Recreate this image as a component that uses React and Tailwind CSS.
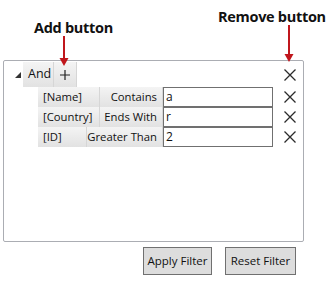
import React from "react";

const XIcon = () => (
  <svg width="12" height="12" viewBox="0 0 12 12" className="block">
    <path d="M0.5 0.5 L11.5 11.5 M11.5 0.5 L0.5 11.5" stroke="#2b2b2b" strokeWidth="1.3" fill="none" />
  </svg>
);

const Arrow = ({ h }) => (
  <svg width="10" height={h} viewBox={`0 0 10 ${h}`} className="block">
    <line x1="5" y1="0" x2="5" y2={h - 6} stroke="#c0161c" strokeWidth="2" />
    <polygon points={`0.5,${h - 8} 9.5,${h - 8} 5,${h}`} fill="#c0161c" />
  </svg>
);

const btn =
  "flex items-center h-full whitespace-nowrap bg-gradient-to-b from-[#f4f4f4] to-[#e2e2e2] border-r border-[#d6d6d6] text-[11.3px] text-[#111] leading-none";

const rows = [
  { field: "[Name]", fw: "w-[62px]", op: "Contains", ow: "w-[63px]", val: "a" },
  { field: "[Country]", fw: "w-[62px]", op: "Ends With", ow: "w-[63px]", val: "r" },
  { field: "[ID]", fw: "w-[49px]", op: "Greater Than", ow: "w-[76px]", val: "2" },
];

export default function App() {
  return (
    <div className="w-[329px] h-[289px] bg-white relative" style={{ fontFamily: '"Open Sans", "Noto Sans", sans-serif' }}>
      <div className="h-[60px] relative">
        <div className="absolute left-[34px] top-[21px] text-[14.5px] leading-none font-bold text-[#111] tracking-[-0.3px] whitespace-nowrap">Add button</div>
        <div className="absolute left-[59px] top-[36px] z-10"><Arrow h={30} /></div>
        <div className="absolute left-[218px] top-[10px] text-[14.5px] leading-none font-bold text-[#111] tracking-[-0.3px] whitespace-nowrap">Remove button</div>
        <div className="absolute left-[284px] top-[25px] z-10"><Arrow h={37} /></div>
      </div>
      <div className="ml-[3px] w-[301px] h-[182px] border border-[#abadb3] rounded-[2px] pt-[1px]">
        <div className="flex items-center h-[25px]">
          <div className="w-[19px] flex justify-end pr-[2px]">
            <svg width="6" height="6" viewBox="0 0 6 6" className="block"><polygon points="6,0 6,6 0,6" fill="#333" /></svg>
          </div>
          <div className={btn + " w-[31px] pl-[5px] text-[12.5px]"}>And</div>
          <div className={btn + " w-[23px] justify-center"}>
            <svg width="10" height="10" viewBox="0 0 10 10" className="block">
              <path d="M5 0 V10 M0 5 H10" stroke="#222" strokeWidth="1.2" fill="none" />
            </svg>
          </div>
          <div className="flex-1" />
          <div className="mr-[7px]"><XIcon /></div>
        </div>
        {rows.map((r) => (
          <div key={r.field} className="flex items-center h-[20px]">
            <div className="w-[34px]" />
            <div className={btn + " " + r.fw + " pl-[5px]"}>{r.field}</div>
            <div className={btn + " " + r.ow + " justify-end pr-[5px]"}>{r.op}</div>
            <div className="w-[110px] h-[20px] border border-[#707070] bg-white flex items-center pl-[2px] text-[12px] text-[#111] leading-none">{r.val}</div>
            <div className="flex-1" />
            <div className="mr-[7px]"><XIcon /></div>
          </div>
        ))}
      </div>
      <div className="flex justify-end gap-[13px] pr-[33px] mt-[5px]">
        <div className="w-[69px] h-[28px] border border-[#707070] bg-[#dddddd] flex items-center justify-center text-[11.5px] text-[#111] whitespace-nowrap">Apply Filter</div>
        <div className="w-[71px] h-[28px] border border-[#707070] bg-[#dddddd] flex items-center justify-center text-[11.5px] text-[#111] whitespace-nowrap">Reset Filter</div>
      </div>
    </div>
  );
}
